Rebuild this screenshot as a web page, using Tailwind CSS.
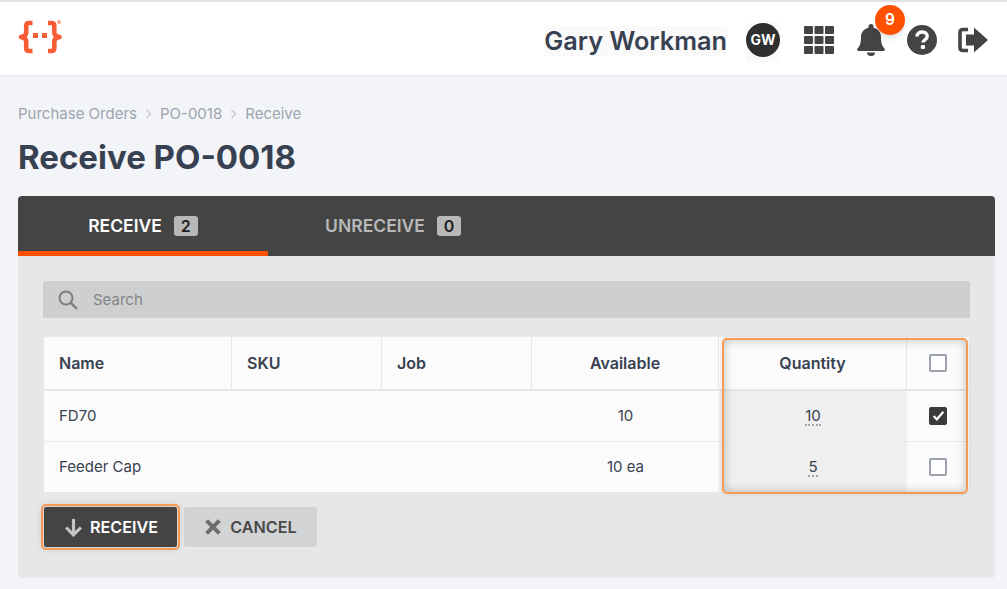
<!DOCTYPE html>
<html lang="en">

<head>
    <meta charset="UTF-8">
    <meta name="viewport" content="width=device-width, initial-scale=1.0">
    <title>Receive PO-0018</title>
    <script src="https://cdn.jsdelivr.net/npm/@tailwindcss/browser@4"></script>
</head>

<body class="bg-[#f3f4f8] font-[Inter,sans-serif] text-[#374151] h-[589px] overflow-hidden">
    <!-- top bar -->
    <header class="h-[77px] bg-white border-t-2 border-t-[#e2e2e2] border-b-2 border-b-[#e9ecf3] flex items-center justify-between pl-[18px] pr-[19px]">
        <svg class="w-[44px] h-[34px] -mt-[3px]" viewBox="0 0 44 34">
            <path d="M14.500 3H11Q8.200 3 8.200 6V12.500Q8.200 16 3 17Q8.200 18 8.200 21.500V28Q8.200 31 11 31H14.500M30 3H33.500Q36.300 3 36.300 6V12.500Q36.300 16 41.500 17Q36.300 18 36.300 21.500V28Q36.300 31 33.500 31H30" fill="none" stroke="#f85c35" stroke-width="4.600" stroke-linejoin="round" />
            <rect x="15" y="13" width="5" height="5" fill="#f85c35" />
            <rect x="24" y="13" width="5" height="5" fill="#f85c35" />
            <circle cx="41" cy="2" r="2" fill="#f9a48f" />
        </svg>
        <div class="flex items-center mt-[3px]">
            <span class="text-[25.300px] leading-[30px] font-semibold mr-[19px] bg-[#fafafa] mt-[2px]">Gary Workman</span>
            <div class="w-[34px] h-[39px] bg-[#fafafa] mr-[24px] mt-[4px]">
                <span class="w-[34px] h-[34px] rounded-full bg-[#2f2f2f] text-white text-[14px] font-bold flex items-center justify-center">GW</span>
            </div>
            <svg class="w-[30px] h-[28px] mr-[23px]" viewBox="0 0 30 28" fill="#444">
                <rect x="0" y="0" width="9" height="8" rx="1" />
                <rect x="10.500" y="0" width="9" height="8" rx="1" />
                <rect x="21" y="0" width="9" height="8" rx="1" />
                <rect x="0" y="10" width="9" height="8" rx="1" />
                <rect x="10.500" y="10" width="9" height="8" rx="1" />
                <rect x="21" y="10" width="9" height="8" rx="1" />
                <rect x="0" y="20" width="9" height="8" rx="1" />
                <rect x="10.500" y="20" width="9" height="8" rx="1" />
                <rect x="21" y="20" width="9" height="8" rx="1" />
            </svg>
            <div class="relative w-[28px] h-[32px] mr-[22px]">
                <svg class="w-[28px] h-[32px]" viewBox="0 0 28 32" fill="#444">
                    <path d="M14 0a2.500 2.500 0 0 0-2.500 2.500v1.200C6.900 4.800 4 8.500 4 13c0 7-1.500 9.500-3.500 11.500-.8.800-.5 2.500 1 2.500h25c1.500 0 1.800-1.700 1-2.500C25.500 22.500 24 20 24 13c0-4.500-2.900-8.200-7.500-9.300V2.500A2.500 2.500 0 0 0 14 0z" />
                    <path d="M10 28.500h8a4 3.500 0 0 1-8 0z" />
                </svg>
                <span class="absolute -top-[19px] left-[18px] w-[30px] h-[30px] rounded-full bg-[#ff5000] text-white text-[15.500px] font-semibold flex items-center justify-center shadow-md">9</span>
            </div>
            <svg class="w-[30px] h-[30px] mr-[21px]" viewBox="0 0 30 30">
                <circle cx="15" cy="15" r="15" fill="#444" />
                <path d="M10 11.500C10 8.500 12.500 7 15.200 7c2.800 0 5 1.700 5 4.300 0 3.700-4.200 3.500-4.200 6.200" fill="none" stroke="#fff" stroke-width="3.400" />
                <rect x="13.800" y="20" width="4.200" height="4" rx="1" fill="#fff" />
            </svg>
            <svg class="w-[30px] h-[26px]" viewBox="0 0 30 26" fill="#444">
                <path d="M10 2.500H5Q2 2.500 2 5.500V20.500Q2 23.500 5 23.500H10" fill="none" stroke="#444" stroke-width="3.600" />
                <path d="M16 0.500L30 13L16 25.500V18.500H8V7.500H16Z" />
            </svg>
        </div>
    </header>

    <main class="pl-[18px] pr-[12px]">
        <!-- breadcrumb -->
        <nav class="flex items-center h-[20px] mt-[27px] text-[15px] text-[#9ca3af]">
            <span>Purchase Orders</span>
            <svg class="w-[7px] h-[10px] mx-[8px]" viewBox="0 0 7 10" fill="none" stroke="#c9ccd2" stroke-width="1.500"><path d="M1.500 1l4 4-4 4" /></svg>
            <span>PO-0018</span>
            <svg class="w-[7px] h-[10px] mx-[8px]" viewBox="0 0 7 10" fill="none" stroke="#c9ccd2" stroke-width="1.500"><path d="M1.500 1l4 4-4 4" /></svg>
            <span>Receive</span>
        </nav>
        <h1 class="text-[33px] leading-[40px] font-bold mt-[13px]">Receive PO-0018</h1>

        <section class="mt-[19px] h-[382px] bg-[#e6e7e9] rounded-[4px] overflow-hidden">
            <!-- tabs -->
            <div class="h-[60px] bg-[#444444] flex">
                <div class="w-[250px] h-full border-b-[5px] border-[#ff5000] flex items-center justify-center gap-[12px] pt-[5px] text-white text-[17.500px] font-semibold">
                    RECEIVE
                    <span class="bg-[#b8b8b8] text-[#222] text-[16px] leading-[20px] w-[24px] text-center rounded-[3px]">2</span>
                </div>
                <div class="w-[250px] h-full flex items-center justify-center gap-[12px] text-[#b8b8b8] text-[17.500px] font-semibold">
                    UNRECEIVE
                    <span class="bg-[#b8b8b8] text-[#222] text-[16px] leading-[20px] w-[24px] text-center rounded-[3px]">0</span>
                </div>
            </div>

            <div class="relative px-[25px] pt-[25px]">
                <!-- search -->
                <div class="h-[37px] bg-[#cecfd1] rounded-t-[3px] flex items-center pl-[15px] pt-[1px] text-[15px] text-[#858585]">
                    <svg class="w-[20px] h-[20px] mr-[15px] -mt-[1px]" viewBox="0 0 20 20" fill="none" stroke="#7d7d7d" stroke-width="2">
                        <circle cx="8" cy="8" r="6.500" />
                        <path d="M12.800 12.800L19 19" stroke-width="2.400" />
                    </svg>
                    Search
                </div>

                <!-- table -->
                <div class="mt-[19px] mx-[1px] bg-[#fbfbfb] text-[15px] outline outline-1 outline-[#e9e9e9]">
                    <div class="grid grid-cols-[188px_150px_150px_187px_188px_62px] h-[54px] border-b-[2px] border-[#e5e5e5] font-semibold text-[16px]">
                        <div class="flex items-center pl-[15px] border-r-[1px] border-[#e5e5e5]">Name</div>
                        <div class="flex items-center pl-[15px] border-r-[1px] border-[#e5e5e5]">SKU</div>
                        <div class="flex items-center pl-[15px] border-r-[1px] border-[#e5e5e5]">Job</div>
                        <div class="flex items-center justify-center border-r-[1px] border-[#e5e5e5]">Available</div>
                        <div class="flex items-center justify-center border-r-[1px] border-[#e5e5e5]">Quantity</div>
                        <div class="flex items-center justify-center pb-[1px]">
                            <span class="w-[18px] h-[18px] bg-white border-[2px] border-[#9ca3af] rounded-[2px]"></span>
                        </div>
                    </div>
                    <div class="grid grid-cols-[188px_150px_150px_187px_188px_62px] h-[51px] border-b-[1px] border-[#e9e9e9]">
                        <div class="flex items-center pl-[15px]">FD70</div>
                        <div></div>
                        <div></div>
                        <div class="flex items-center justify-center">10</div>
                        <div class="flex items-center justify-center bg-[#efefef]">
                            <span class="border-b-[2px] border-dotted border-[#a3a3a3] leading-[17px]">10</span>
                        </div>
                        <div class="flex items-center justify-center pb-[1px]">
                            <span class="w-[18px] h-[18px] bg-[#3a3a3a] rounded-[2px] flex items-center justify-center">
                                <svg class="w-[13px] h-[13px]" viewBox="0 0 12 12" fill="none" stroke="#fff" stroke-width="2"><path d="M1.500 6.500l3 3 6-7" /></svg>
                            </span>
                        </div>
                    </div>
                    <div class="grid grid-cols-[188px_150px_150px_187px_188px_62px] h-[50px]">
                        <div class="flex items-center pl-[15px]">Feeder Cap</div>
                        <div></div>
                        <div></div>
                        <div class="flex items-center justify-center">10 ea</div>
                        <div class="flex items-center justify-center bg-[#efefef]">
                            <span class="border-b-[2px] border-dotted border-[#a3a3a3] leading-[17px]">5</span>
                        </div>
                        <div class="flex items-center justify-center pb-[1px]">
                            <span class="w-[18px] h-[18px] bg-white border-[2px] border-[#9ca3af] rounded-[2px]"></span>
                        </div>
                    </div>
                </div>

                <!-- highlight over the quantity columns -->
                <div class="absolute left-[704px] top-[82px] w-[246px] h-[156px] rounded-[5px] border-[2px] border-[#f79a55] shadow-[inset_0_0_10px_rgba(0,0,0,0.25),0_0_4px_rgba(0,0,0,0.12)]"></div>

                <!-- buttons -->
                <div class="flex mt-[15px] ml-[1px] gap-[7px]">
                    <button class="w-[133px] h-[40px] bg-[#444444] rounded-[2px] text-white text-[16.200px] font-semibold flex items-center justify-center gap-[7px] outline-[2px] outline-offset-[1px] outline-[#f79a55] shadow-[0_0_10px_rgba(0,0,0,0.2)]">
                        <svg class="w-[19px] h-[19px] ml-[1px]" viewBox="0 0 18 18" fill="none" stroke="#c4c4c4" stroke-width="3"><path d="M9 1v15M2 9l7 7 7-7" /></svg>
                        RECEIVE
                    </button>
                    <button class="w-[133px] h-[40px] bg-[#d2d3d5] rounded-[3px] text-[#4a4a4a] text-[16.200px] font-semibold flex items-center justify-center gap-[9px] pl-[1px]">
                        <svg class="w-[16px] h-[16px]" viewBox="0 0 15 15" fill="none" stroke="#6e6e6e" stroke-width="3.800"><path d="M1.500 1.500l12 12M13.500 1.500l-12 12" /></svg>
                        CANCEL
                    </button>
                </div>
            </div>
        </section>
    </main>
</body>

</html>
